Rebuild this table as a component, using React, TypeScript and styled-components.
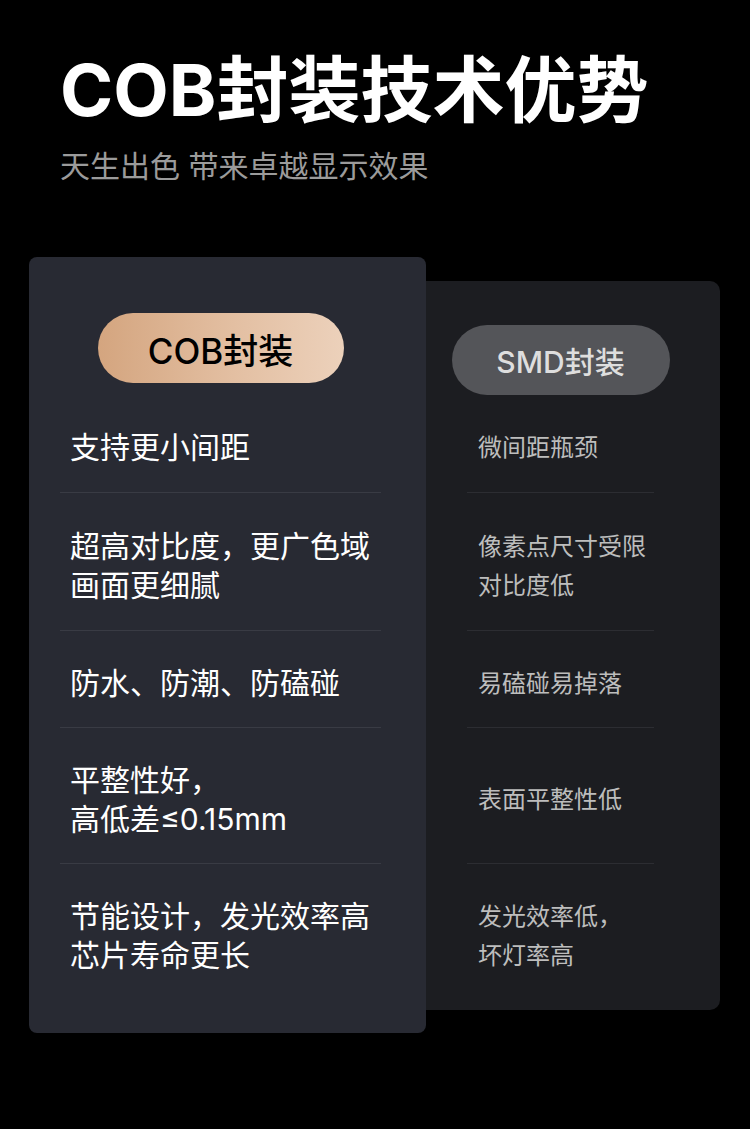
import { FC } from "react";
import styled, { createGlobalStyle } from "styled-components";

const GlobalStyle = createGlobalStyle`
  body {
    margin: 0;
    background: #000;
    font-family: Inter, "Noto Sans CJK SC", sans-serif;
  }
`;

const ROW_HEIGHTS = [98, 138, 97, 136, 136];

const cobRows: string[][] = [
  ["支持更小间距"],
  ["超高对比度，更广色域", "画面更细腻"],
  ["防水、防潮、防磕碰"],
  ["平整性好，", "高低差≤0.15mm"],
  ["节能设计，发光效率高", "芯片寿命更长"],
];

const smdRows: string[][] = [
  ["微间距瓶颈"],
  ["像素点尺寸受限", "对比度低"],
  ["易磕碰易掉落"],
  ["表面平整性低"],
  ["发光效率低，", "坏灯率高"],
];

const App: FC = () => {
  return (
    <Page>
      <GlobalStyle />
      <Header>
        <Title>COB封装技术优势</Title>
        <Subtitle>天生出色 带来卓越显示效果</Subtitle>
      </Header>
      <Compare>
        <CobCard>
          <CobPill>COB封装</CobPill>
          {cobRows.map((lines, i) => (
            <CobRow key={i} h={ROW_HEIGHTS[i]} last={i === cobRows.length - 1}>
              <div>
                {lines.map((l) => (
                  <div key={l}>{l}</div>
                ))}
              </div>
            </CobRow>
          ))}
        </CobCard>
        <SmdCard>
          <SmdPill>SMD封装</SmdPill>
          {smdRows.map((lines, i) => (
            <SmdRow key={i} h={ROW_HEIGHTS[i]} last={i === smdRows.length - 1}>
              <div>
                {lines.map((l) => (
                  <div key={l}>{l}</div>
                ))}
              </div>
            </SmdRow>
          ))}
        </SmdCard>
      </Compare>
    </Page>
  );
};

const Page = styled.div`
  width: 750px;
  min-height: 1129px;
  background: #000;
  overflow: hidden;
`;

const Header = styled.div`
  padding: 54px 0 0 60px;
`;

const Title = styled.h1`
  margin: 0;
  font-size: 72px;
  line-height: 72px;
  font-weight: 700;
  color: #fff;
`;

const Subtitle = styled.p`
  margin: 20px 0 0;
  font-size: 30px;
  line-height: 40px;
  color: #9b9b9b;
`;

const Compare = styled.div`
  display: flex;
  align-items: flex-start;
  margin: 71px 0 0 29px;
`;

const CobCard = styled.div`
  position: relative;
  z-index: 1;
  width: 397px;
  box-sizing: border-box;
  padding: 56px 45px 33px 31px;
  background: #282a33;
  border-radius: 8px;
  display: flex;
  flex-direction: column;
  align-items: center;
`;

const SmdCard = styled.div`
  width: 294px;
  box-sizing: border-box;
  margin-top: 24px;
  padding: 44px 66px 10px 41px;
  background: #1c1d21;
  border-radius: 0 10px 10px 0;
  display: flex;
  flex-direction: column;
  align-items: center;
`;

const CobPill = styled.div`
  width: 246px;
  height: 70px;
  margin-bottom: 12px;
  border-radius: 35px;
  background: linear-gradient(90deg, #d4a57f 0%, #e3bfa2 55%, #ecd1bb 100%);
  display: flex;
  align-items: center;
  justify-content: center;
  font-size: 35px;
  font-weight: 500;
  color: #000;
  flex-shrink: 0;
`;

const SmdPill = styled.div`
  width: 218px;
  height: 70px;
  border-radius: 35px;
  background: #545559;
  display: flex;
  align-items: center;
  justify-content: center;
  font-size: 30px;
  font-weight: 500;
  color: #dedede;
  flex-shrink: 0;
`;

const Row = styled.div<{ h: number; last?: boolean }>`
  align-self: stretch;
  height: ${(p) => p.h}px;
  box-sizing: border-box;
  display: flex;
  align-items: center;
  padding-top: 8px;
`;

const CobRow = styled(Row)`
  padding-left: 10px;
  font-size: 30px;
  line-height: 39px;
  color: #fff;
  border-bottom: ${(p) => (p.last ? "none" : "1px solid #393b44")};
`;

const SmdRow = styled(Row)`
  padding-left: 11px;
  font-size: 24px;
  line-height: 39px;
  color: #bdbdbd;
  border-bottom: ${(p) => (p.last ? "none" : "1px solid #2c2d32")};
`;

export default App;
